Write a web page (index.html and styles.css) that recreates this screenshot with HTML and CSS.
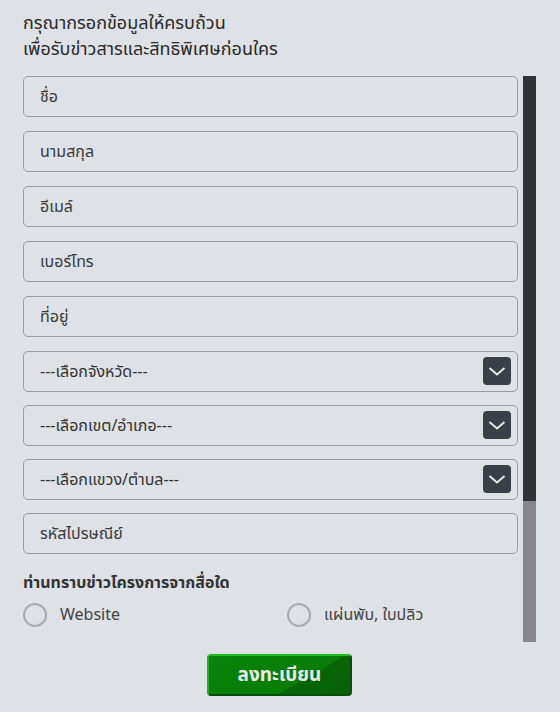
FILE: index.html
```html
<!DOCTYPE html>
<html lang="th">
<head>
	<meta charset="utf-8" />
	<title>ลงทะเบียน</title>
	<meta name="viewport" content="width=device-width,initial-scale=1.0">
	<link rel="stylesheet" href="styles.css">
</head>

<body>
<div class="wrap">
<h2 class="title">กรุณากรอกข้อมูลให้ครบถ้วน<br>เพื่อรับข่าวสารและสิทธิพิเศษก่อนใคร</h2>

<form class="regform" action="#">
<div class="panel">
 <div class="fields">
  <input type="text" class="field" placeholder="ชื่อ">
  <input type="text" class="field" placeholder="นามสกุล">
  <input type="text" class="field" placeholder="อีเมล์">
  <input type="text" class="field" placeholder="เบอร์โทร">
  <input type="text" class="field" placeholder="ที่อยู่">

  <div class="selectbox">
    <select class="field">
      <option>---เลือกจังหวัด---</option>
    </select>
    <span class="arrow"><svg width="28" height="28" viewBox="0 0 28 28"><path d="M6.5 11 L14 17.5 L21.5 11" fill="none" stroke="#e6e8ea" stroke-width="2"/></svg></span>
  </div>
  <div class="selectbox">
    <select class="field">
      <option>---เลือกเขต/อำเภอ---</option>
    </select>
    <span class="arrow"><svg width="28" height="28" viewBox="0 0 28 28"><path d="M6.5 11 L14 17.5 L21.5 11" fill="none" stroke="#e6e8ea" stroke-width="2"/></svg></span>
  </div>
  <div class="selectbox">
    <select class="field">
      <option>---เลือกแขวง/ตำบล---</option>
    </select>
    <span class="arrow"><svg width="28" height="28" viewBox="0 0 28 28"><path d="M6.5 11 L14 17.5 L21.5 11" fill="none" stroke="#e6e8ea" stroke-width="2"/></svg></span>
  </div>

  <input type="text" class="field" placeholder="รหัสไปรษณีย์">

  <p class="question">ท่านทราบข่าวโครงการจากสื่อใด</p>
  <div class="choices">
    <label class="choice"><input type="radio" name="media"><span class="dot"></span>Website</label>
    <label class="choice"><input type="radio" name="media"><span class="dot"></span>แผ่นพับ, ใบปลิว</label>
  </div>
 </div>
 <div class="track"><div class="thumb"></div></div>
</div>

<div class="actions">
  <input type="submit" class="button" value="ลงทะเบียน">
</div>
</form>
</div>
</body>
</html>
```

FILE: styles.css
```css
body {
  margin: 0;
  background: #dee1e5;
  color: #333;
  font-family: "Noto Sans Thai", "Noto Sans", "DejaVu Sans", sans-serif;
}

.wrap {
  padding: 11px 0 0 23px;
}

.title {
  margin: 0;
  font-size: 18px;
  font-weight: normal;
  line-height: 26px;
  color: #2a2a2a;
}

.panel {
  margin-top: 13px;
  display: flex;
  gap: 5px;
  height: 566px;
}

.fields {
  width: 495px;
}

/* fake scrollbar */
.track {
  width: 13px;
  background: #85878c;
}

.thumb {
  height: 425px;
  background: #2f3336;
}

.field {
  display: block;
  width: 100%;
  height: 41px;
  margin: 0 0 14px 0;
  padding: 0 16px;
  box-sizing: border-box;
  border: 1px solid #9a9ca0;
  border-radius: 5px;
  background: transparent;
  font-family: inherit;
  font-size: 16px;
  color: #333;
  outline: none;
  -webkit-appearance: none;
  appearance: none;
}

.field::placeholder {
  color: #3a3a3a;
}

.selectbox {
  position: relative;
}

.selectbox .field {
  margin-bottom: 13px;
}

.arrow {
  position: absolute;
  top: 6px;
  right: 7px;
  width: 28px;
  height: 28px;
  border-radius: 4px;
  background: #3a4048;
  pointer-events: none;
}

.arrow svg {
  display: block;
}

.question {
  margin: 18px 0 8px 0;
  font-size: 16px;
  font-weight: bold;
  line-height: 22px;
}

.choices {
  display: grid;
  grid-template-columns: 264px 1fr;
}

.choice {
  display: flex;
  align-items: center;
  gap: 13px;
  font-size: 16px;
  color: #444;
  height: 26px;
  cursor: pointer;
}

.choice input {
  display: none;
}

.dot {
  width: 20px;
  height: 20px;
  border: 2px solid #a9abaf;
  border-radius: 50%;
}

.choice input:checked + .dot {
  background: #0a880a;
}

.actions {
  width: 513px;
  padding-top: 12px;
  display: flex;
  justify-content: center;
}

.button {
  width: 145px;
  height: 42px;
  border: 2px solid;
  border-color: #20bc20 #04500a #04500a #1ab41a;
  border-radius: 4px;
  background: linear-gradient(150deg, #098309 0%, #087d08 65%, #066506 66%, #066006 100%);
  color: #e8e8e8;
  font-family: inherit;
  font-size: 19px;
  font-weight: bold;
  cursor: pointer;
  -webkit-appearance: none;
}
```
